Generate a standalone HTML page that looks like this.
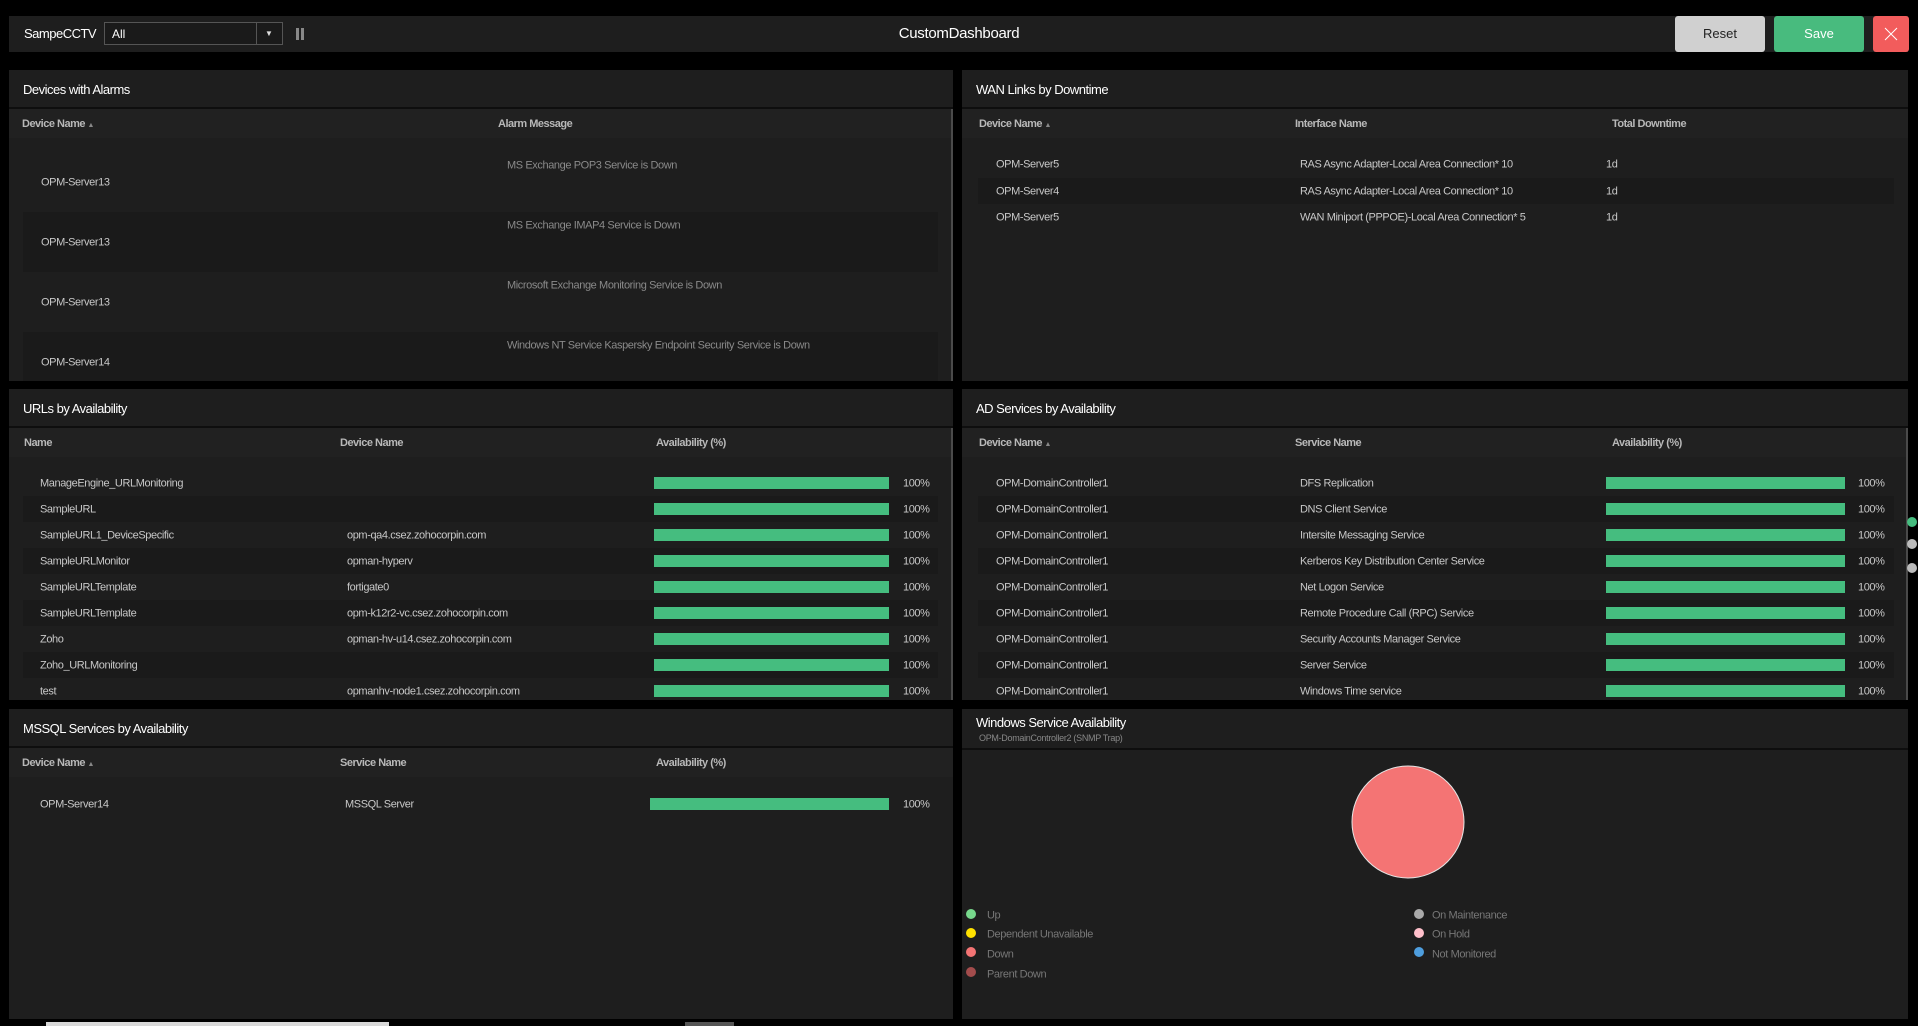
<!DOCTYPE html>
<html><head><meta charset="utf-8"><style>
*{margin:0;padding:0;box-sizing:border-box}
body{width:1918px;height:1026px;background:#000;font-family:"Liberation Sans",sans-serif;overflow:hidden;position:relative;color:#ccc}
.a{position:absolute;white-space:nowrap}
.p{position:absolute;background:#1e1e1e;overflow:hidden}
.t{position:absolute;left:14px;top:12px;font-size:13px;color:#fff;letter-spacing:-0.5px}
.hl{position:absolute;left:0;right:0;top:37px;height:2px;background:#0e0e0e}
.hr{position:absolute;left:0;right:0;top:39px;height:29px;background:#212121}
.h{position:absolute;top:48px;font-size:11px;font-weight:bold;color:#b8b8b8;letter-spacing:-0.5px}
.s{position:absolute;background:#1a1a1a}
.r{position:absolute;font-size:11px;color:#c8c8c8;letter-spacing:-0.4px;transform:translateY(-45%)}
.m{position:absolute;font-size:11px;color:#8a8a8a;letter-spacing:-0.4px;transform:translateY(-45%)}
.b{position:absolute;height:12px;background:#45bd7f;transform:translateY(-50%)}
.sb{position:absolute;right:0;top:39px;bottom:0;width:2px;background:#4a4a4a}
.ar{font-size:7px;color:#888}
.d{position:absolute;width:10px;height:10px;border-radius:50%}
.lg{position:absolute;font-size:11px;color:#777;letter-spacing:-0.4px;transform:translateY(-45%)}
</style></head><body>

<div class="a" style="left:9px;top:16px;width:1899px;height:36px;background:#1e1e1e"></div>
<div class="a" style="left:24px;top:26px;font-size:13px;color:#fff;letter-spacing:-0.5px">SampeCCTV</div>
<div class="a" style="left:104px;top:22px;width:179px;height:23px;border:1px solid #555;background:#1a1a1a"></div>
<div class="a" style="left:112px;top:27px;font-size:12px;color:#fff">All</div>
<div class="a" style="left:256px;top:22px;width:1px;height:23px;background:#555"></div>
<div class="a" style="left:265px;top:29px;font-size:8px;color:#ddd">▼</div>
<div class="a" style="left:296px;top:28px;width:3px;height:12px;background:#888"></div>
<div class="a" style="left:301px;top:28px;width:3px;height:12px;background:#888"></div>
<div class="a" style="left:0;width:1918px;top:25px;text-align:center;font-size:15px;color:#fff;letter-spacing:-0.3px">CustomDashboard</div>
<div class="a" style="left:1675px;top:16px;width:90px;height:36px;background:#d0d0d0;border-radius:3px;color:#222;font-size:13px;text-align:center;line-height:36px">Reset</div>
<div class="a" style="left:1774px;top:16px;width:90px;height:36px;background:#48bb7e;border-radius:3px;color:#fff;font-size:13px;text-align:center;line-height:36px">Save</div>
<div class="a" style="left:1873px;top:16px;width:36px;height:36px;background:#f25c5c;border-radius:3px"><svg width="36" height="36"><path d="M12 12L24 24M24 12L12 24" stroke="#fff" stroke-width="1"/></svg></div>

<div class="p" style="left:9px;top:70px;width:944px;height:311px">
<div class="t">Devices with Alarms</div><div class="hl"></div><div class="hr"></div>
<div class="h" style="left:13px">Device Name <span class="ar">▲</span></div>
<div class="h" style="left:489px">Alarm Message</div>
<div class="s" style="left:14px;width:915px;top:142px;height:60px"></div>
<div class="s" style="left:14px;width:915px;top:262px;height:60px"></div>
<div class="r" style="left:32px;top:112px">OPM-Server13</div><div class="m" style="left:498px;top:95px">MS Exchange POP3 Service is Down</div>
<div class="r" style="left:32px;top:172px">OPM-Server13</div><div class="m" style="left:498px;top:155px">MS Exchange IMAP4 Service is Down</div>
<div class="r" style="left:32px;top:232px">OPM-Server13</div><div class="m" style="left:498px;top:215px">Microsoft Exchange Monitoring Service is Down</div>
<div class="r" style="left:32px;top:292px">OPM-Server14</div><div class="m" style="left:498px;top:275px">Windows NT Service Kaspersky Endpoint Security Service is Down</div>
<div class="sb"></div>
</div>

<div class="p" style="left:962px;top:70px;width:946px;height:311px">
<div class="t">WAN Links by Downtime</div><div class="hl"></div><div class="hr"></div>
<div class="h" style="left:17px">Device Name <span class="ar">▲</span></div>
<div class="h" style="left:333px">Interface Name</div>
<div class="h" style="left:650px">Total Downtime</div>
<div class="s" style="left:16px;width:916px;top:108px;height:26px"></div>
<div class="r" style="left:34px;top:94px">OPM-Server5</div><div class="r" style="left:338px;top:94px">RAS Async Adapter-Local Area Connection* 10</div><div class="r" style="left:644px;top:94px">1d</div>
<div class="r" style="left:34px;top:121px">OPM-Server4</div><div class="r" style="left:338px;top:121px">RAS Async Adapter-Local Area Connection* 10</div><div class="r" style="left:644px;top:121px">1d</div>
<div class="r" style="left:34px;top:147px">OPM-Server5</div><div class="r" style="left:338px;top:147px">WAN Miniport (PPPOE)-Local Area Connection* 5</div><div class="r" style="left:644px;top:147px">1d</div>
</div>

<div class="p" style="left:9px;top:389px;width:944px;height:311px">
<div class="t">URLs by Availability</div><div class="hl"></div><div class="hr"></div>
<div class="h" style="left:15px">Name</div>
<div class="h" style="left:331px">Device Name</div>
<div class="h" style="left:647px">Availability (%)</div>
<div class="s" style="left:14px;width:915px;top:107px;height:26px"></div>
<div class="s" style="left:14px;width:915px;top:159px;height:26px"></div>
<div class="s" style="left:14px;width:915px;top:211px;height:26px"></div>
<div class="s" style="left:14px;width:915px;top:263px;height:26px"></div>
<div class="r" style="left:31px;top:94px">ManageEngine_URLMonitoring</div><div class="b" style="left:645px;top:94px;width:235px"></div><div class="r" style="left:894px;top:94px">100%</div>
<div class="r" style="left:31px;top:120px">SampleURL</div><div class="b" style="left:645px;top:120px;width:235px"></div><div class="r" style="left:894px;top:120px">100%</div>
<div class="r" style="left:31px;top:146px">SampleURL1_DeviceSpecific</div><div class="r" style="left:338px;top:146px">opm-qa4.csez.zohocorpin.com</div><div class="b" style="left:645px;top:146px;width:235px"></div><div class="r" style="left:894px;top:146px">100%</div>
<div class="r" style="left:31px;top:172px">SampleURLMonitor</div><div class="r" style="left:338px;top:172px">opman-hyperv</div><div class="b" style="left:645px;top:172px;width:235px"></div><div class="r" style="left:894px;top:172px">100%</div>
<div class="r" style="left:31px;top:198px">SampleURLTemplate</div><div class="r" style="left:338px;top:198px">fortigate0</div><div class="b" style="left:645px;top:198px;width:235px"></div><div class="r" style="left:894px;top:198px">100%</div>
<div class="r" style="left:31px;top:224px">SampleURLTemplate</div><div class="r" style="left:338px;top:224px">opm-k12r2-vc.csez.zohocorpin.com</div><div class="b" style="left:645px;top:224px;width:235px"></div><div class="r" style="left:894px;top:224px">100%</div>
<div class="r" style="left:31px;top:250px">Zoho</div><div class="r" style="left:338px;top:250px">opman-hv-u14.csez.zohocorpin.com</div><div class="b" style="left:645px;top:250px;width:235px"></div><div class="r" style="left:894px;top:250px">100%</div>
<div class="r" style="left:31px;top:276px">Zoho_URLMonitoring</div><div class="b" style="left:645px;top:276px;width:235px"></div><div class="r" style="left:894px;top:276px">100%</div>
<div class="r" style="left:31px;top:302px">test</div><div class="r" style="left:338px;top:302px">opmanhv-node1.csez.zohocorpin.com</div><div class="b" style="left:645px;top:302px;width:235px"></div><div class="r" style="left:894px;top:302px">100%</div>
<div class="sb"></div>
</div>

<div class="p" style="left:962px;top:389px;width:946px;height:311px">
<div class="t">AD Services by Availability</div><div class="hl"></div><div class="hr"></div>
<div class="h" style="left:17px">Device Name <span class="ar">▲</span></div>
<div class="h" style="left:333px">Service Name</div>
<div class="h" style="left:650px">Availability (%)</div>
<div class="s" style="left:16px;width:916px;top:107px;height:26px"></div>
<div class="s" style="left:16px;width:916px;top:159px;height:26px"></div>
<div class="s" style="left:16px;width:916px;top:211px;height:26px"></div>
<div class="s" style="left:16px;width:916px;top:263px;height:26px"></div>
<div class="r" style="left:34px;top:94px">OPM-DomainController1</div><div class="r" style="left:338px;top:94px">DFS Replication</div><div class="b" style="left:644px;top:94px;width:239px"></div><div class="r" style="left:896px;top:94px">100%</div>
<div class="r" style="left:34px;top:120px">OPM-DomainController1</div><div class="r" style="left:338px;top:120px">DNS Client Service</div><div class="b" style="left:644px;top:120px;width:239px"></div><div class="r" style="left:896px;top:120px">100%</div>
<div class="r" style="left:34px;top:146px">OPM-DomainController1</div><div class="r" style="left:338px;top:146px">Intersite Messaging Service</div><div class="b" style="left:644px;top:146px;width:239px"></div><div class="r" style="left:896px;top:146px">100%</div>
<div class="r" style="left:34px;top:172px">OPM-DomainController1</div><div class="r" style="left:338px;top:172px">Kerberos Key Distribution Center Service</div><div class="b" style="left:644px;top:172px;width:239px"></div><div class="r" style="left:896px;top:172px">100%</div>
<div class="r" style="left:34px;top:198px">OPM-DomainController1</div><div class="r" style="left:338px;top:198px">Net Logon Service</div><div class="b" style="left:644px;top:198px;width:239px"></div><div class="r" style="left:896px;top:198px">100%</div>
<div class="r" style="left:34px;top:224px">OPM-DomainController1</div><div class="r" style="left:338px;top:224px">Remote Procedure Call (RPC) Service</div><div class="b" style="left:644px;top:224px;width:239px"></div><div class="r" style="left:896px;top:224px">100%</div>
<div class="r" style="left:34px;top:250px">OPM-DomainController1</div><div class="r" style="left:338px;top:250px">Security Accounts Manager Service</div><div class="b" style="left:644px;top:250px;width:239px"></div><div class="r" style="left:896px;top:250px">100%</div>
<div class="r" style="left:34px;top:276px">OPM-DomainController1</div><div class="r" style="left:338px;top:276px">Server Service</div><div class="b" style="left:644px;top:276px;width:239px"></div><div class="r" style="left:896px;top:276px">100%</div>
<div class="r" style="left:34px;top:302px">OPM-DomainController1</div><div class="r" style="left:338px;top:302px">Windows Time service</div><div class="b" style="left:644px;top:302px;width:239px"></div><div class="r" style="left:896px;top:302px">100%</div>
<div class="sb"></div>
</div>
<div class="d" style="left:1907px;top:517px;background:#45bd7f"></div>
<div class="d" style="left:1907px;top:539px;background:#bbb"></div>
<div class="d" style="left:1907px;top:563px;background:#bbb"></div>

<div class="p" style="left:9px;top:709px;width:944px;height:310px">
<div class="t">MSSQL Services by Availability</div><div class="hl"></div><div class="hr"></div>
<div class="h" style="left:13px">Device Name <span class="ar">▲</span></div>
<div class="h" style="left:331px">Service Name</div>
<div class="h" style="left:647px">Availability (%)</div>
<div class="r" style="left:31px;top:95px">OPM-Server14</div><div class="r" style="left:336px;top:95px">MSSQL Server</div><div class="b" style="left:641px;top:95px;width:239px"></div><div class="r" style="left:894px;top:95px">100%</div>
</div>

<div class="p" style="left:962px;top:709px;width:946px;height:310px">
<div class="t" style="top:6px">Windows Service Availability</div>
<div class="a" style="left:17px;top:24px;font-size:9px;color:#888;letter-spacing:-0.3px">OPM-DomainController2 (SNMP Trap)</div>
<div class="a" style="left:0;right:0;top:39px;height:2px;background:#0e0e0e"></div>
<svg class="a" style="left:0;top:0" width="946" height="310"><circle cx="446" cy="113" r="56" fill="#f47474" stroke="#e6e6e6" stroke-width="1"/></svg>
<div class="d" style="left:4px;top:200px;background:#77d88c"></div><div class="lg" style="left:25px;top:206px">Up</div>
<div class="d" style="left:4px;top:219px;background:#ffe100"></div><div class="lg" style="left:25px;top:225px">Dependent Unavailable</div>
<div class="d" style="left:4px;top:238px;background:#f47474"></div><div class="lg" style="left:25px;top:245px">Down</div>
<div class="d" style="left:4px;top:258px;background:#a34c4c"></div><div class="lg" style="left:25px;top:265px">Parent Down</div>
<div class="d" style="left:452px;top:200px;background:#aaa"></div><div class="lg" style="left:470px;top:206px">On Maintenance</div>
<div class="d" style="left:452px;top:219px;background:#ffc0cb"></div><div class="lg" style="left:470px;top:225px">On Hold</div>
<div class="d" style="left:452px;top:238px;background:#4e9ede"></div><div class="lg" style="left:470px;top:245px">Not Monitored</div>
</div>

<div class="a" style="left:46px;top:1022px;width:343px;height:4px;background:#d8d8d8"></div>
<div class="a" style="left:685px;top:1022px;width:49px;height:4px;background:#555"></div>
</body></html>
